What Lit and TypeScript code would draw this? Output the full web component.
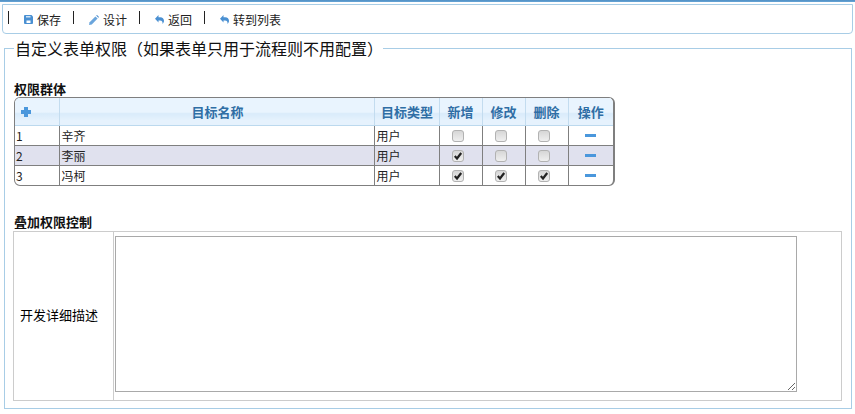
import { LitElement, html, css, svg } from "lit";
import { customElement } from "lit/decorators.js";

const rows = [
  { id: 1, name: "辛齐", add: false, edit: false, del: false },
  { id: 2, name: "李丽", add: true, edit: false, del: false },
  { id: 3, name: "冯柯", add: true, edit: true, del: true },
];

const saveIcon = svg`<svg class="ic" width="9" height="9" viewBox="0 0 9 9"><path fill="#4a90d2" d="M1 0h6.500L9 1.500V8a1 1 0 0 1-1 1H1a1 1 0 0 1-1-1V1a1 1 0 0 1 1-1z"/><rect x="2" y="1" width="4.500" height="1.500" fill="#cfe3f5"/><rect x="2.500" y="5.500" width="4" height="2.500" fill="#ffffff"/></svg>`;
const penIcon = svg`<svg class="ic" width="10" height="10" viewBox="0 0 10 10"><path fill="#6aa5dc" d="M0 10l.6-2.800L6.400 1.400l2.200 2.200L2.800 9.400z"/><path fill="#3f86cc" d="M7.200.6 8 0l2 2-.7.800z"/></svg>`;
const backIcon = svg`<svg class="ic" width="9" height="9" viewBox="0 0 9 9"><path fill="#4a90d2" d="M3.500 0v2.200H5.200C7.600 2.200 9 3.700 9 5.800c0 1.300-.6 2.400-1.500 3.200.4-1.900-.4-3.600-2.600-3.600H3.500V7.600L0 3.800z"/></svg>`;
const checkMark = svg`<svg class="mark" width="12" height="12" viewBox="0 0 12 12"><path fill="none" stroke="#222" stroke-width="2.200" d="M2.800 6l2.200 2.500 4.200-5.500"/></svg>`;

const tools = [
  { icon: saveIcon, label: "保存" },
  { icon: penIcon, label: "设计" },
  { icon: backIcon, label: "返回" },
  { icon: backIcon, label: "转到列表" },
];

@customElement("app-root")
export class AppRoot extends LitElement {
  static styles = css`
    :host {
      display: block;
      font-family: "Noto Sans CJK SC", "Liberation Sans", sans-serif;
      font-size: 12px;
      color: #000;
    }
    .strip {
      height: 2px;
      background: linear-gradient(#4f8fc4, #69a6d6);
    }
    .toolbar {
      display: flex;
      align-items: center;
      box-sizing: border-box;
      height: 30px;
      margin: 2px 2px 0;
      padding: 0 0 3px 5px;
      border: 1px solid #a8cde6;
      border-radius: 0 0 4px 4px;
    }
    .tool {
      display: flex;
      align-items: center;
      height: 13px;
      padding: 0 12px 0 15px;
      border-left: 1px solid #222;
      color: #222;
      line-height: 14px;
    }
    .tool > * {
      margin-top: 4px;
    }
    .ic {
      flex: none;
      margin-right: 4px;
    }
    fieldset {
      box-sizing: border-box;
      display: block;
      height: 372px;
      margin: 3px 3px 0 4px;
      padding: 0 9px;
      border: 1px solid #a8cde6;
      min-width: 0;
    }
    legend {
      box-sizing: border-box;
      width: 369px;
      margin-left: 0;
      padding: 0 0 0 1px;
      font-size: 16px;
      line-height: 22px;
      color: #111;
    }
    .title {
      margin: 0;
      font-size: 13px;
      line-height: 14px;
      font-weight: 700;
      color: #111;
    }
    .t1 {
      margin-top: 23px;
    }
    .t2 {
      margin-top: 29px;
    }
    .grid-wrap {
      box-sizing: border-box;
      width: 601px;
      margin-top: 1px;
      border: 1px solid #7f7f7f;
      border-right-width: 2px;
      border-radius: 6px;
      overflow: hidden;
    }
    table {
      border-collapse: collapse;
      table-layout: fixed;
      width: 100%;
    }
    th {
      height: 27px;
      padding: 0;
      font-size: 13px;
      font-weight: 700;
      color: #2f6ea5;
      border-left: 1px solid #c3dcef;
      border-bottom: 1px solid #bcd9ee;
      background: linear-gradient(#e9f4fe 0, #e9f4fe 52%, #d9ebfa 58%, #e6f2fd 85%);
    }
    th:first-child,
    td:first-child {
      border-left: 0;
    }
    th.name {
      padding-left: 2px;
    }
    th.type {
      padding-left: 1px;
    }
    td {
      height: 19px;
      padding: 0 0 0 1px;
      border-left: 1px solid #7f7f7f;
      border-top: 1px solid #7f7f7f;
      font-size: 12px;
      line-height: 14px;
      color: #222;
    }
    td.t {
      padding-left: 2px;
    }
    tbody tr:first-child td {
      border-top: 0;
    }
    tr.alt td {
      background: #e0e1ee;
    }
    td.c {
      padding: 0;
      text-align: center;
    }
    td.k {
      padding: 0 0 0 12px;
    }
    .cb {
      display: grid;
      width: 12px;
      height: 12px;
    }
    .cb > * {
      grid-area: 1 / 1;
    }
    .cb input {
      appearance: none;
      box-sizing: border-box;
      width: 12px;
      height: 12px;
      margin: 0;
      border: 1px solid #b2b2b2;
      border-radius: 3px;
      background: linear-gradient(#d6d6d6, #efefef);
    }
    .mark {
      pointer-events: none;
    }
    .minus {
      display: block;
      width: 11px;
      height: 3px;
      margin: 0 auto;
      background: #4a97dc;
    }
    .plus {
      display: block;
      margin-left: 6px;
    }
    .form {
      box-sizing: border-box;
      display: grid;
      grid-template-columns: 100px 1fr;
      width: 829px;
      height: 170px;
      margin: 2px 0 0 -1px;
      border: 1px solid #cccccc;
    }
    .label {
      display: flex;
      align-items: center;
      padding: 0 0 3px 6px;
      font-size: 13px;
      color: #000;
      border-right: 1px solid #cccccc;
    }
    .field {
      padding: 4px 1px;
    }
    textarea {
      display: block;
      box-sizing: border-box;
      width: 682px;
      height: 156px;
      margin: 0;
      padding: 2px;
      border: 1px solid #a9a9a9;
      outline: 0;
      background: #fff;
      resize: both;
    }
  `;

  render() {
    const cb = (on: boolean, label: string) => html`<span class="cb">
      <input type="checkbox" .checked=${on} aria-label=${label} />
      ${on ? checkMark : ""}
    </span>`;
    return html`
      <div class="strip"></div>
      <div class="toolbar">
        ${tools.map((t) => html`<span class="tool">${t.icon}<span>${t.label}</span></span>`)}
      </div>
      <fieldset>
        <legend>自定义表单权限（如果表单只用于流程则不用配置）</legend>
        <h3 class="title t1">权限群体</h3>
        <div class="grid-wrap">
          <table>
            <colgroup>
              <col style="width:44px" /><col /><col style="width:65px" /><col style="width:43px" /><col style="width:43px" /><col style="width:43px" /><col style="width:45px" />
            </colgroup>
            <thead>
              <tr>
                <th>
                  <svg class="plus" width="10" height="10" viewBox="0 0 10 10"><path fill="#4a97dc" d="M3 0h4v3h3v4H7v3H3V7H0V3h3z"/></svg>
                </th>
                <th class="name">目标名称</th>
                <th class="type">目标类型</th>
                <th>新增</th>
                <th>修改</th>
                <th>删除</th>
                <th>操作</th>
              </tr>
            </thead>
            <tbody>
              ${rows.map(
                (r) => html`<tr class=${r.id === 2 ? "alt" : ""}>
                  <td>${r.id}</td>
                  <td class="t">${r.name}</td>
                  <td class="t">用户</td>
                  <td class="k">${cb(r.add, "新增")}</td>
                  <td class="k">${cb(r.edit, "修改")}</td>
                  <td class="k">${cb(r.del, "删除")}</td>
                  <td class="c"><span class="minus"></span></td>
                </tr>`
              )}
            </tbody>
          </table>
        </div>
        <h3 class="title t2">叠加权限控制</h3>
        <div class="form">
          <div class="label">开发详细描述</div>
          <div class="field"><textarea aria-label="开发详细描述"></textarea></div>
        </div>
      </fieldset>
    `;
  }
}
